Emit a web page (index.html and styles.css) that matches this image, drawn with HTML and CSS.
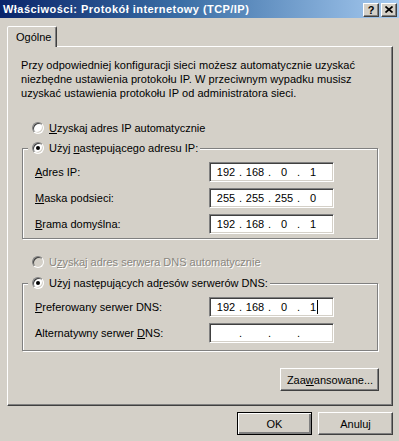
FILE: index.html
```html
<!DOCTYPE html>
<html lang="pl">
<head>
<meta charset="utf-8">
<title>Właściwości: Protokół internetowy (TCP/IP)</title>
<link rel="stylesheet" href="styles.css">
</head>
<body>
<div class="window">
  <div class="titlebar">
    <span class="title">Właściwości: Protokół internetowy (TCP/IP)</span>
    <div class="caption-btns">
      <span class="cbtn help">?</span>
      <span class="cbtn close"><svg width="8" height="7" viewBox="0 0 8 7"><path d="M0.5 0.5 L7.5 6.5 M7.5 0.5 L0.5 6.5" stroke="#000" stroke-width="1.7" fill="none"/></svg></span>
    </div>
  </div>
  <div class="client">
    <div class="tabs"><div class="tab">Ogólne</div></div>
    <div class="sheet">
      <p class="intro">Przy odpowiedniej konfiguracji sieci możesz automatycznie uzyskać<br>niezbędne ustawienia protokołu IP. W przeciwnym wypadku musisz<br>uzyskać ustawienia protokołu IP od administratora sieci.</p>

      <div class="opt opt-first"><span class="radio"></span><span><u>U</u>zyskaj adres IP automatycznie</span></div>

      <fieldset class="group group-ip">
        <legend class="opt"><span class="radio checked"></span><span>Użyj <u>n</u>astępującego adresu IP:</span></legend>
        <div class="rows rows-ip">
          <div class="row"><span class="lbl"><u>A</u>dres IP:</span><div class="ip"><span class="oct">192</span><span class="dot">.</span><span class="oct">168</span><span class="dot">.</span><span class="oct">0</span><span class="dot">.</span><span class="oct">1</span></div></div>
          <div class="row"><span class="lbl"><u>M</u>aska podsieci:</span><div class="ip"><span class="oct">255</span><span class="dot">.</span><span class="oct">255</span><span class="dot">.</span><span class="oct">255</span><span class="dot">.</span><span class="oct">0</span></div></div>
          <div class="row"><span class="lbl"><u>B</u>rama domyślna:</span><div class="ip"><span class="oct">192</span><span class="dot">.</span><span class="oct">168</span><span class="dot">.</span><span class="oct">0</span><span class="dot">.</span><span class="oct">1</span></div></div>
        </div>
      </fieldset>

      <div class="opt opt-dns disabled"><span class="radio"></span><span>U<u>z</u>yskaj adres serwera DNS automatycznie</span></div>

      <fieldset class="group group-dns">
        <legend class="opt"><span class="radio checked"></span><span>Użyj następujących ad<u>r</u>esów serwerów DNS:</span></legend>
        <div class="rows rows-dns">
          <div class="row"><span class="lbl"><u>P</u>referowany serwer DNS:</span><div class="ip"><span class="oct">192</span><span class="dot">.</span><span class="oct">168</span><span class="dot">.</span><span class="oct">0</span><span class="dot">.</span><span class="oct caret">1</span></div></div>
          <div class="row"><span class="lbl">Alternatywny serwer <u>D</u>NS:</span><div class="ip"><span class="oct"></span><span class="dot">.</span><span class="oct"></span><span class="dot">.</span><span class="oct"></span><span class="dot">.</span><span class="oct"></span></div></div>
        </div>
      </fieldset>

      <div class="adv-row"><button class="btn adv">Zaa<u>w</u>ansowane...</button></div>
    </div>
    <div class="footer">
      <button class="btn default">OK</button>
      <button class="btn">Anuluj</button>
    </div>
  </div>
</div>
</body>
</html>
```
FILE: styles.css
```css
* { box-sizing: border-box; }
html, body { margin: 0; padding: 0; }
body {
  width: 399px;
  height: 441px;
  background: #d4d0c8;
  font-family: "Liberation Sans", Arial, sans-serif;
  font-size: 11px;
  color: #000;
  overflow: hidden;
}
.window { width: 399px; height: 441px; }

.titlebar {
  height: 18px;
  background: linear-gradient(to right, #0a246a 0%, #3a6ea5 45%, #a6caf0 100%);
  display: flex;
  align-items: center;
  justify-content: space-between;
  padding: 0 2px 0 3px;
}
.title {
  color: #fff;
  font-weight: bold;
  font-size: 11px;
  letter-spacing: 0.45px;
  white-space: nowrap;
}
.caption-btns { display: flex; gap: 2px; margin-top: 1px; }
.cbtn {
  width: 16px;
  height: 14px;
  background: #d4d0c8;
  border: 1px solid;
  border-color: #fff #404040 #404040 #fff;
  box-shadow: inset -1px -1px 0 #808080;
  display: flex;
  align-items: center;
  justify-content: center;
  font-weight: bold;
  font-size: 11px;
  line-height: 1;
}
.cbtn.help { padding-top: 1px; }

.client { padding: 8px 0 0 7px; }
.tabs { display: flex; height: 20px; }
.tab {
  position: relative;
  z-index: 1;
  width: 50px;
  height: 21px;
  background: #d4d0c8;
  border: 1px solid;
  border-bottom: none;
  border-color: #fff #404040 transparent #fff;
  border-top-left-radius: 2px;
  border-top-right-radius: 2px;
  box-shadow: inset -1px 0 0 #808080;
  padding: 4px 0 0 8px;
  line-height: 13px;
}
.sheet {
  width: 386px;
  height: 360px;
  border: 1px solid;
  border-color: #fff #404040 #404040 #fff;
  box-shadow: inset -1px -1px 0 #808080;
  padding: 11px 13px 0 13px;
}
.intro { margin: 0; line-height: 14px; letter-spacing: 0.05px; }

.opt { display: flex; align-items: center; gap: 5px; height: 14px; line-height: 14px; }
.opt-first { margin: 21px 0 0 11px; }
.opt-dns { margin: 16px 0 0 11px; }
.disabled { color: #8a8780; text-shadow: 1px 1px 0 #fff; }

.radio {
  flex: none;
  width: 12px;
  height: 12px;
  border-radius: 50%;
  background: #fff;
  border: 1px solid;
  border-color: #808080 #fff #fff #808080;
  box-shadow: inset 1px 1px 0 #404040, inset -1px -1px 0 #d4d0c8;
  display: flex;
  align-items: center;
  justify-content: center;
}
.disabled .radio { background: #d4d0c8; }
.radio.checked::after {
  content: "";
  width: 4px;
  height: 4px;
  border-radius: 50%;
  background: #000;
}

.group {
  margin: 0 0 0 1px;
  width: 356px;
  padding: 0;
  border: 1px solid #808080;
  box-shadow: 1px 1px 0 #fff, inset 1px 1px 0 #fff;
  min-inline-size: 0;
}
.group-ip { margin-top: 6px; }
.group-dns { margin-top: 7px; }
.group legend {
  margin-left: 5px;
  padding: 0 2px 0 4px;
  background: #d4d0c8;
}
.rows { display: flex; flex-direction: column; gap: 6px; padding-left: 12px; }
.rows-ip { padding-top: 7px; padding-bottom: 4px; }
.rows-dns { padding-top: 7px; padding-bottom: 7px; }
.row { display: flex; align-items: center; height: 20px; }
.lbl { width: 174px; flex: none; }
.ip {
  width: 125px;
  height: 20px;
  background: #fff;
  border: 1px solid;
  border-color: #808080 #fff #fff #808080;
  box-shadow: inset 1px 1px 0 #404040, inset -1px -1px 0 #d4d0c8;
  display: flex;
  align-items: center;
  padding-left: 4px;
}
.oct { width: 24px; text-align: center; }
.dot { width: 5px; text-align: center; }
.caret { position: relative; }
.caret::after {
  content: "";
  position: absolute;
  left: 16px;
  top: -1px;
  width: 1px;
  height: 14px;
  background: #000;
}

.adv-row { display: flex; justify-content: flex-end; margin-top: 17px; width: 358px; }
.btn {
  font: inherit;
  color: #000;
  background: #d4d0c8;
  height: 23px;
  border: 1px solid;
  border-color: #fff #404040 #404040 #fff;
  box-shadow: inset -1px -1px 0 #808080;
  padding: 0;
  margin: 0;
}
.adv { width: 99px; padding-left: 1px; }
.footer { display: flex; gap: 6px; margin: 6px 0 0 230px; }
.footer .btn { width: 75px; }
.btn.default {
  border: 1px solid #000;
  box-shadow: inset 1px 1px 0 #fff, inset -1px -1px 0 #808080, inset -2px -2px 0 #808080;
}
```
